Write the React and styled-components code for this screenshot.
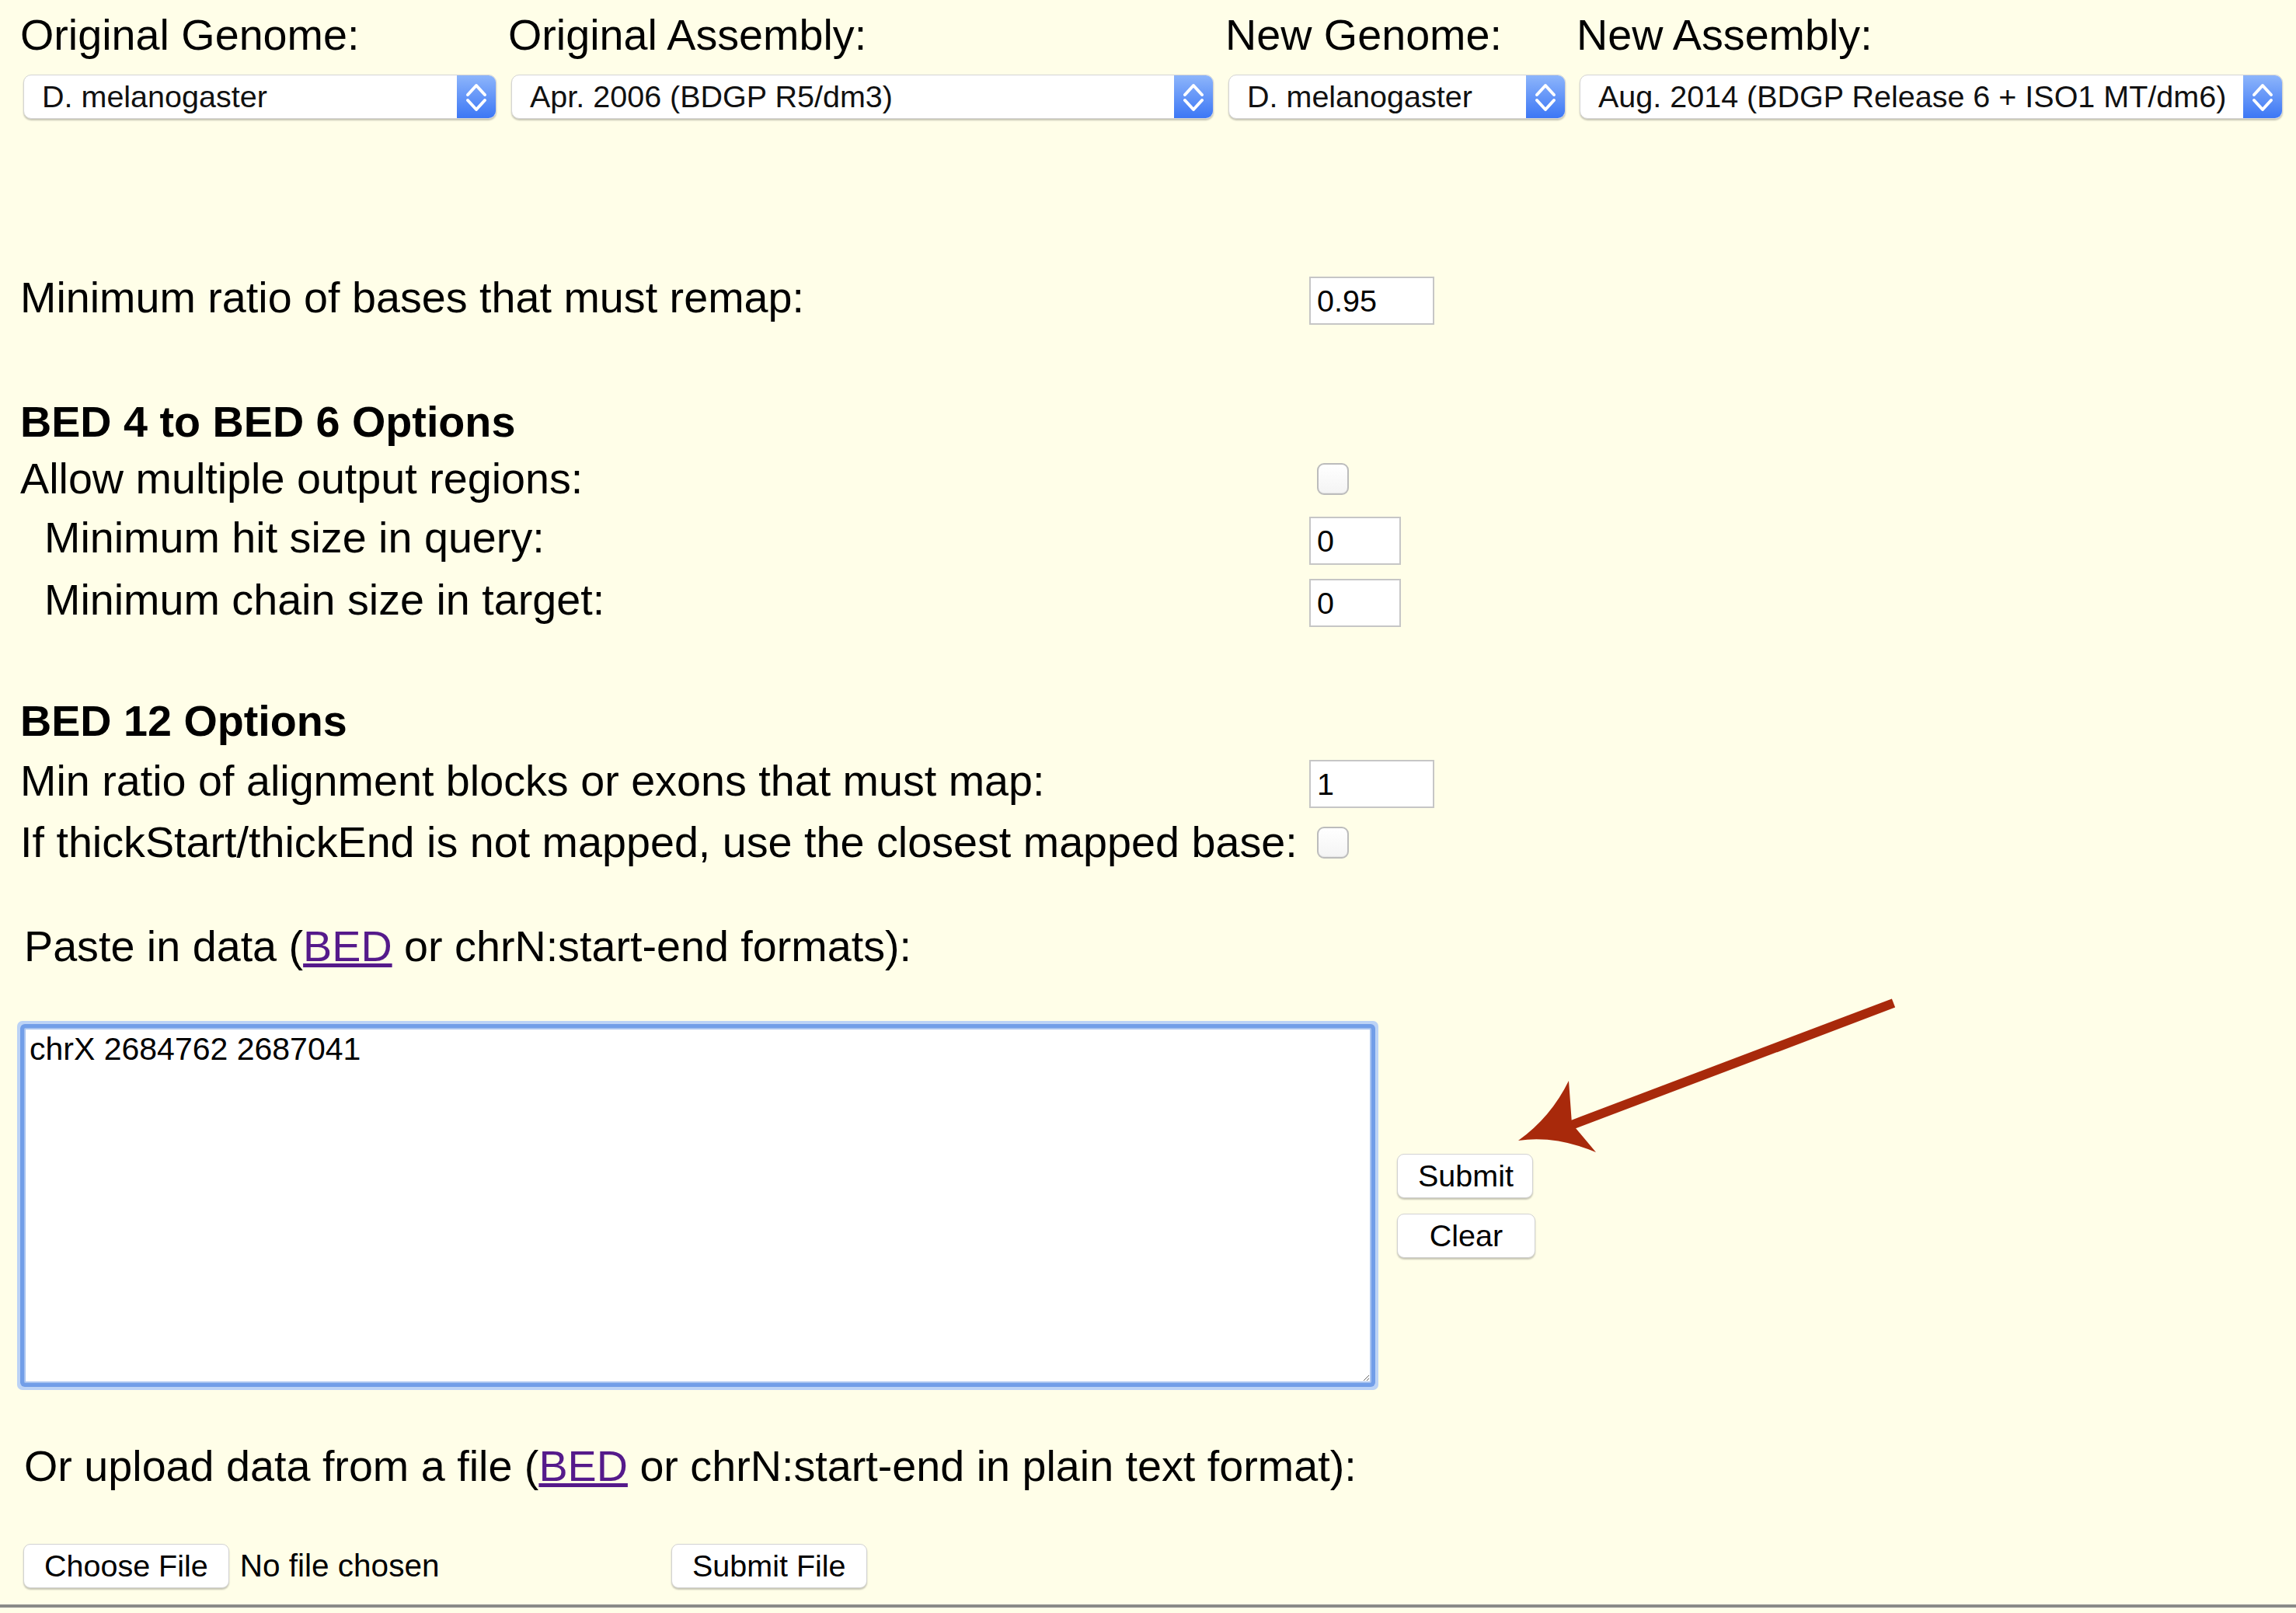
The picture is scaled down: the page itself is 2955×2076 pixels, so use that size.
import React from 'react';
import styled, {createGlobalStyle} from 'styled-components';

const GlobalStyle = createGlobalStyle`
  html, body {
    margin: 0;
    padding: 0;
    background: #fffee8;
  }
  body {
    font-family: "Liberation Sans", Arial, Helvetica, sans-serif;
    color: #000;
  }
`;

const genomes = [
    {label: 'Original Genome:', value: 'D. melanogaster', width: 609},
    {label: 'Original Assembly:', value: 'Apr. 2006 (BDGP R5/dm3)', width: 904},
    {label: 'New Genome:', value: 'D. melanogaster', width: 434},
    {label: 'New Assembly:', value: 'Aug. 2014 (BDGP Release 6 + ISO1 MT/dm6)', width: 905},
];

const Stepper = () => (
    <StepperBox>
        <svg width="50" height="55" viewBox="0 0 50 55">
            <polyline points="14,25 25,13 36,25" fill="none" stroke="#fff" strokeWidth="4" strokeLinecap="round" strokeLinejoin="round" />
            <polyline points="14,32 25,44 36,32" fill="none" stroke="#fff" strokeWidth="4" strokeLinecap="round" strokeLinejoin="round" />
        </svg>
    </StepperBox>
);

const Select = ({value, width}) => (
    <SelectBox $w={width}>
        <SelectText>{value}</SelectText>
        <Stepper />
    </SelectBox>
);

const Arrow = () => (
    <ArrowLayer width="510" height="215" viewBox="0 0 510 215">
        <line x1="497" y1="11" x2="80" y2="169" stroke="#a8290b" strokeWidth="12" />
        <path d="M14,188 Q56,158 79,111 L83,166 L114,203 Q62,181 14,188 Z" fill="#a8290b" />
    </ArrowLayer>
);

export default () => (
    <>
        <GlobalStyle />
        <Page>
            <GenomeGrid>
                {genomes.map(g => (
                    <GenomeCell key={g.label}>
                        <TopLabel>{g.label}</TopLabel>
                        <Select value={g.value} width={g.width} />
                    </GenomeCell>
                ))}
            </GenomeGrid>

            <OptionRow $mt={194}>
                <RowLabel $raise>Minimum ratio of bases that must remap:</RowLabel>
                <NumberInput $w={161} defaultValue="0.95" />
            </OptionRow>

            <Heading $mt={83}>BED 4 to BED 6 Options</Heading>
            <OptionRow>
                <RowLabel>Allow multiple output regions:</RowLabel>
                <CheckBox type="checkbox" />
            </OptionRow>
            <OptionRow>
                <RowLabel $indent $raise>Minimum hit size in query:</RowLabel>
                <NumberInput $w={118} defaultValue="0" />
            </OptionRow>
            <OptionRow>
                <RowLabel $indent $raise>Minimum chain size in target:</RowLabel>
                <NumberInput $w={118} defaultValue="0" />
            </OptionRow>

            <Heading $mt={79}>BED 12 Options</Heading>
            <OptionRow $mt={8}>
                <RowLabel $raise>Min ratio of alignment blocks or exons that must map:</RowLabel>
                <NumberInput $w={161} defaultValue="1" />
            </OptionRow>
            <OptionRow $mt={-5}>
                <RowLabel>If thickStart/thickEnd is not mapped, use the closest mapped base:</RowLabel>
                <CheckBox type="checkbox" />
            </OptionRow>

            <Para $mt={61}>
                Paste in data (<FormatLink href="#bed">BED</FormatLink> or chrN:start-end formats):
            </Para>

            <PasteSection>
                <DataArea defaultValue="chrX 2684762 2687041" spellCheck={false} />
                <ButtonStack>
                    <Button $w={175}>Submit</Button>
                    <Button $w={178}>Clear</Button>
                </ButtonStack>
            </PasteSection>

            <Para $mt={74}>
                Or upload data from a file (<FormatLink href="#bed">BED</FormatLink> or chrN:start-end in plain text format):
            </Para>

            <FileRow>
                <FilePicker>
                    <Button>Choose File</Button>
                    <FileName>No file chosen</FileName>
                </FilePicker>
                <Button>Submit File</Button>
            </FileRow>

            <Divider />
            <Arrow />
        </Page>
    </>
);

const Page = styled.div`
  position: relative;
  box-sizing: border-box;
  min-height: 2076px;
  padding: 14px 0 0 26px;
`;

const GenomeGrid = styled.div`
  display: grid;
  grid-template-columns: 628px 923px 452px 1fr;
`;

const GenomeCell = styled.div`
  display: flex;
  flex-direction: column;
  gap: 20px;
`;

const TopLabel = styled.div`
  font-size: 55.7px;
  line-height: 62px;
  white-space: nowrap;
`;

const SelectBox = styled.div`
  margin-left: 4px;
  width: ${p => p.$w}px;
  height: 57px;
  box-sizing: border-box;
  display: flex;
  align-items: stretch;
  background: #fff;
  border: 1px solid #d4d4d4;
  border-radius: 10px;
  box-shadow: 0 2px 2px rgba(0, 0, 0, 0.22);
  overflow: hidden;
  font-size: 39.5px;
`;

const SelectText = styled.span`
  flex: 1;
  display: flex;
  align-items: center;
  padding-left: 23px;
  white-space: nowrap;
  color: #111;
`;

const StepperBox = styled.span`
  width: 50px;
  display: flex;
  align-items: center;
  justify-content: center;
  background: linear-gradient(#8db5fb, #3c77f5);
`;

const OptionRow = styled.div`
  display: grid;
  grid-template-columns: 1659px auto;
  align-items: center;
  height: 80px;
  margin-top: ${p => p.$mt || 0}px;
`;

const RowLabel = styled.div`
  font-size: 55.7px;
  line-height: 66px;
  white-space: nowrap;
  padding-left: ${p => (p.$indent ? 31 : 0)}px;
  padding-bottom: ${p => (p.$raise ? 8 : 0)}px;
`;

const Heading = styled.h3`
  margin: ${p => p.$mt || 0}px 0 0;
  font-size: 55.7px;
  line-height: 66px;
  height: 66px;
  font-weight: bold;
`;

const NumberInput = styled.input`
  width: ${p => p.$w}px;
  height: 62px;
  box-sizing: border-box;
  margin: 0;
  padding: 0 8px;
  border: 2px solid #c6c6c6;
  border-radius: 0;
  background: #fff;
  font: 39.5px "Liberation Sans", Arial, sans-serif;
  color: #000;
  outline: none;
`;

const CheckBox = styled.input`
  appearance: none;
  -webkit-appearance: none;
  margin: 0 0 0 10px;
  width: 41px;
  height: 41px;
  box-sizing: border-box;
  border: 2px solid #bcbcbc;
  border-radius: 9px;
  background: linear-gradient(#ffffff, #f4f4f4);
  box-shadow: inset 0 -1px 1px rgba(0, 0, 0, 0.06);
`;

const Para = styled.p`
  margin: ${p => p.$mt || 0}px 0 0;
  padding-left: 5px;
  font-size: 55.7px;
  line-height: 66px;
  white-space: nowrap;
`;

const FormatLink = styled.a`
  color: #551a8b;
  text-decoration: underline;
`;

const PasteSection = styled.div`
  display: flex;
  align-items: center;
  gap: 33px;
  margin-top: 72px;
`;

const DataArea = styled.textarea`
  display: block;
  width: 1734px;
  height: 457px;
  box-sizing: border-box;
  margin: 0 0 0 5px;
  padding: 2px 5px;
  border: 2px solid #a9c4f0;
  border-radius: 2px;
  box-shadow: 0 0 0 5px #729ee8, 0 0 0 9px #bcd3f6;
  background: #fff;
  font: 41px/1.15 "Liberation Sans", Arial, sans-serif;
  color: #000;
  outline: none;
  resize: both;
`;

const ButtonStack = styled.div`
  display: flex;
  flex-direction: column;
  gap: 20px;
`;

const Button = styled.button`
  height: 57px;
  box-sizing: border-box;
  ${p => (p.$w ? `width: ${p.$w}px;` : '')}
  padding: 0 26px;
  border: 1px solid #d2d2d2;
  border-radius: 9px;
  background: #fff;
  box-shadow: 0 2px 2px rgba(0, 0, 0, 0.22);
  font: 39.5px "Liberation Sans", Arial, sans-serif;
  color: #000;
  white-space: nowrap;
`;

const FileRow = styled.div`
  display: grid;
  grid-template-columns: 834px auto;
  justify-items: start;
  align-items: center;
  margin-top: 67px;
  padding-left: 4px;
`;

const FilePicker = styled.div`
  display: flex;
  align-items: center;
`;

const FileName = styled.span`
  margin-left: 14px;
  font-size: 40.5px;
`;

const Divider = styled.div`
  margin: 21px 0 0 -26px;
  height: 4px;
  background: #8a8a88;
`;

const ArrowLayer = styled.svg`
  position: absolute;
  left: 1940px;
  top: 1280px;
  overflow: visible;
  pointer-events: none;
`;
